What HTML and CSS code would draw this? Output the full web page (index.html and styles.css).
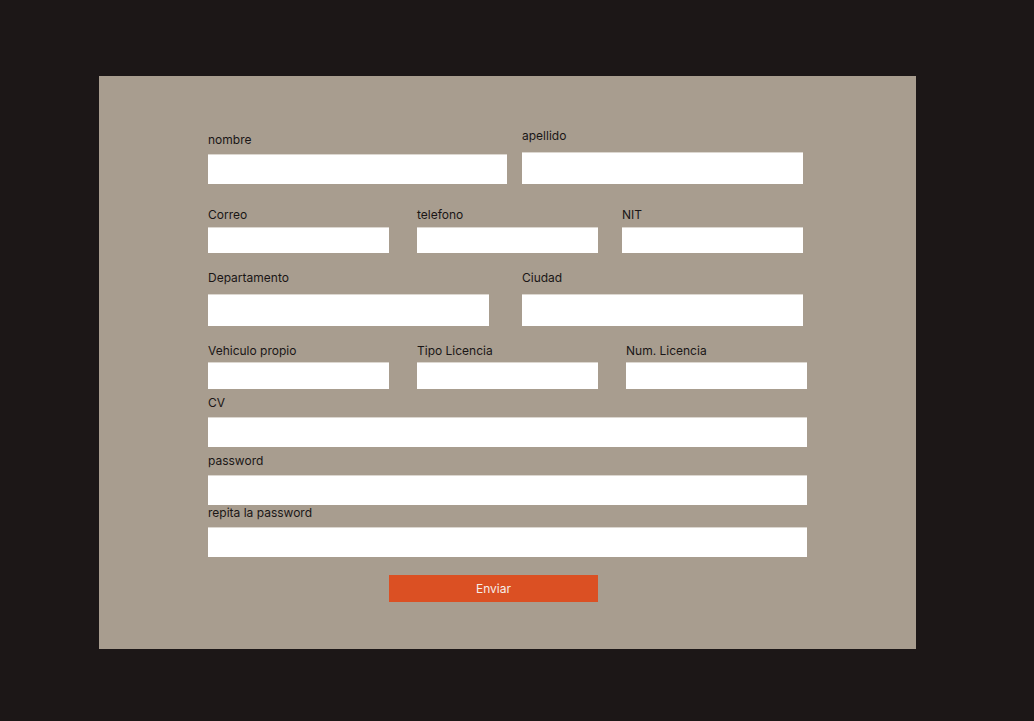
FILE: index.html
```html
<!DOCTYPE html>
<html lang="es">
<head>
<meta charset="utf-8">
<title>Registro</title>
<link rel="stylesheet" href="styles.css">
</head>
<body>
<main class="panel">
  <form class="form">
    <div class="row row-1">
      <label class="field w-299 gap-6"><span class="lbl">nombre</span><input class="inp h-30" type="text"></label>
      <label class="field w-281 gap-9"><span class="lbl">apellido</span><input class="inp h-32" type="text"></label>
    </div>
    <div class="row row-2">
      <label class="field w-181 gap-4"><span class="lbl">Correo</span><input class="inp h-26" type="text"></label>
      <label class="field w-181 gap-4"><span class="lbl">telefono</span><input class="inp h-26" type="text"></label>
      <label class="field w-181 gap-4"><span class="lbl">NIT</span><input class="inp h-26" type="text"></label>
    </div>
    <div class="row row-3">
      <label class="field w-281 gap-9"><span class="lbl">Departamento</span><input class="inp h-32" type="text"></label>
      <label class="field w-281 gap-9"><span class="lbl">Ciudad</span><input class="inp h-32" type="text"></label>
    </div>
    <div class="row row-4">
      <label class="field w-181 gap-3"><span class="lbl">Vehiculo propio</span><input class="inp h-27" type="text"></label>
      <label class="field w-181 gap-3"><span class="lbl">Tipo Licencia</span><input class="inp h-27" type="text"></label>
      <label class="field w-181 gap-3"><span class="lbl">Num. Licencia</span><input class="inp h-27" type="text"></label>
    </div>
    <label class="field w-599 gap-6 single cv"><span class="lbl">CV</span><input class="inp h-30" type="text"></label>
    <label class="field w-599 gap-6 single pw"><span class="lbl">password</span><input class="inp h-30" type="password"></label>
    <label class="field w-599 gap-6 single pw2"><span class="lbl">repita la password</span><input class="inp h-30" type="password"></label>
    <button class="btn" type="button">Enviar</button>
  </form>
</main>
</body>
</html>
```

FILE: styles.css
```css
html, body {
  margin: 0;
  padding: 0;
}
body {
  background: #1c1717;
  font-family: Inter, "Noto Sans", "Liberation Sans", sans-serif;
  font-size: 12px;
  color: #1a1616;
  height: 721px;
  overflow: hidden;
}
.panel {
  margin: 76px 0 0 99px;
  width: 817px;
  height: 573px;
  background: #a89d8f;
  box-sizing: border-box;
  padding: 52px 0 0 109px;
}
.form {
  display: flex;
  flex-direction: column;
  align-items: flex-start;
}
.row {
  display: flex;
  align-items: flex-end;
}
.row-1 { gap: 15px; }
.row-2 { gap: 28px; margin-top: 22.5px; }
.row-2 .field:last-child { margin-left: -4px; }
.row-3 { gap: 33px; margin-top: 17px; }
.row-4 { gap: 28px; margin-top: 16.5px; }
.field {
  display: flex;
  flex-direction: column;
}
.lbl {
  display: block;
  line-height: 15px;
  height: 15px;
  white-space: nowrap;
}
.gap-3 .lbl { margin-bottom: 4.5px; }
.gap-4 .lbl { margin-bottom: 5.5px; }
.gap-6 .lbl { margin-bottom: 7px; }
.gap-9 .lbl { margin-bottom: 9px; }
.w-181 { width: 181px; }
.w-281 { width: 281px; }
.w-299 { width: 299px; }
.w-599 { width: 599px; }
.row-1 .gap-6 .lbl { margin-bottom: 7px; }
.inp {
  display: block;
  width: 100%;
  box-sizing: border-box;
  margin: 0;
  padding: 0 8px;
  border: none;
  border-top: 1px solid #dcd7d0;
  background: #ffffff;
  font: inherit;
  outline: none;
}
.h-26 { height: 26px; }
.h-27 { height: 27px; }
.h-30 { height: 30px; }
.h-32 { height: 32px; }
.single.cv { margin-top: 6px; }
.single.pw { margin-top: 6px; }
.single.pw2 { margin-top: 0px; }
.btn {
  margin: 18px 0 0 181px;
  width: 209px;
  height: 27px;
  border: none;
  padding: 0;
  background: #db5023;
  color: #f6eee9;
  font-family: Inter, "Noto Sans", "Liberation Sans", sans-serif;
  font-size: 12px;
  cursor: pointer;
}
```
